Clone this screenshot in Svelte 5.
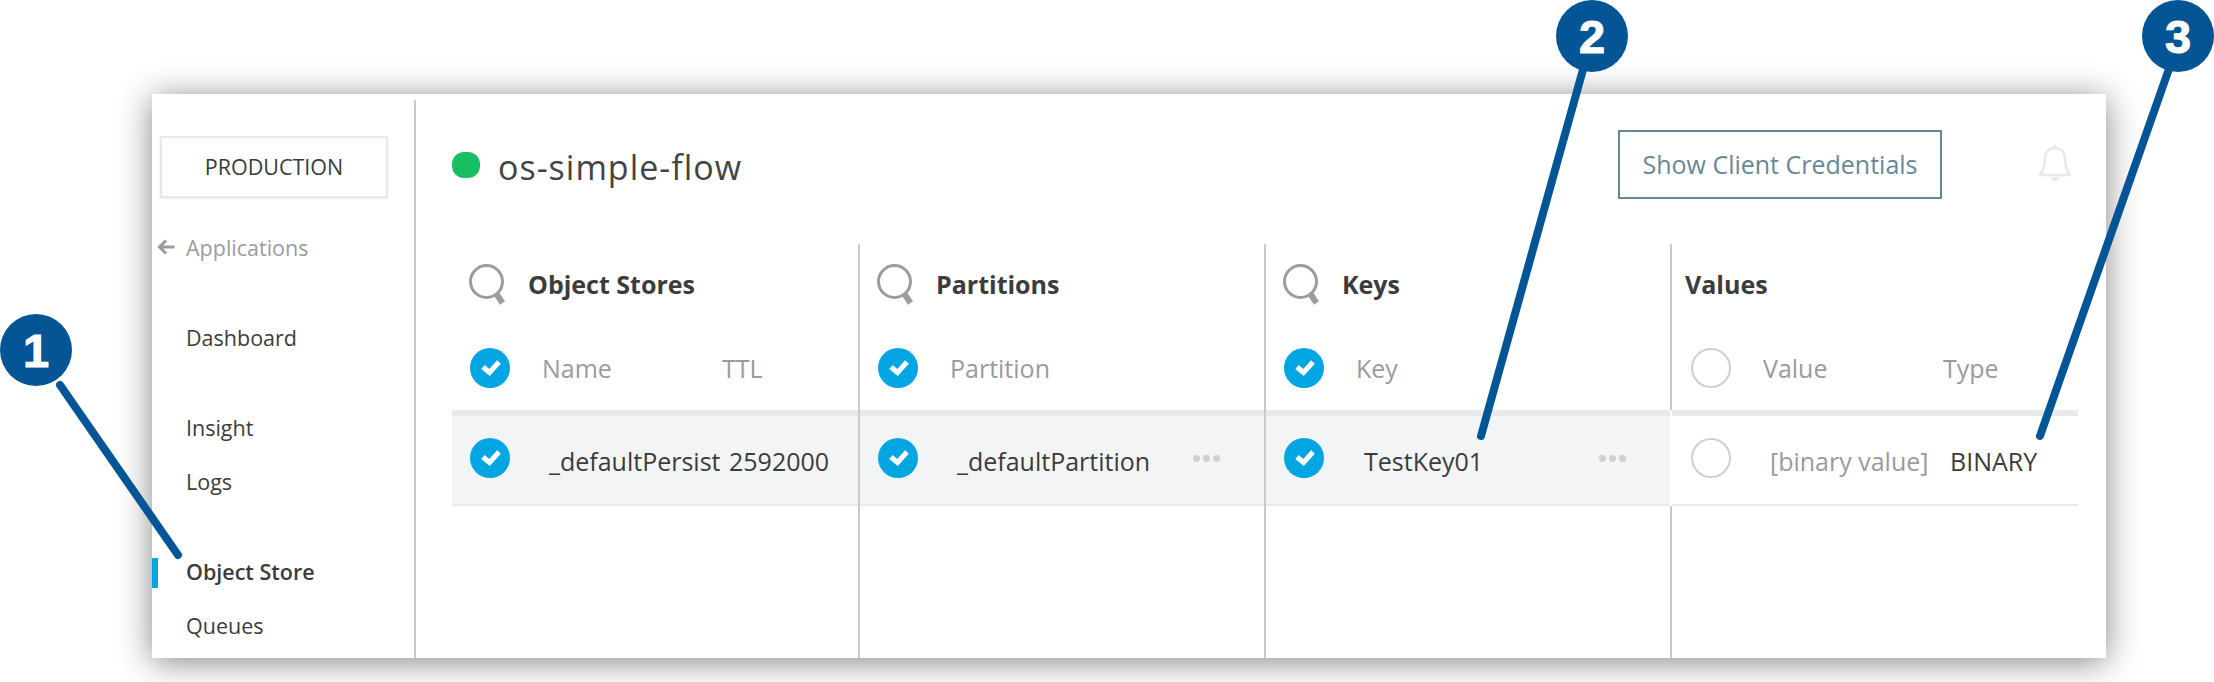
<script>
  const nav = [
    { label: 'Dashboard', group: true },
    { label: 'Insight', group: true },
    { label: 'Logs' },
    { label: 'Object Store', group: true, active: true },
    { label: 'Queues' }
  ];

  const columns = [
    {
      id: 'stores',
      title: 'Object Stores',
      search: true,
      checked: true,
      headers: ['Name', 'TTL'],
      cells: ['_defaultPersist', '2592000']
    },
    {
      id: 'partitions',
      title: 'Partitions',
      search: true,
      checked: true,
      headers: ['Partition'],
      cells: ['_defaultPartition'],
      more: true
    },
    {
      id: 'keys',
      title: 'Keys',
      search: true,
      checked: true,
      headers: ['Key'],
      cells: ['TestKey01'],
      more: true
    },
    {
      id: 'values',
      title: 'Values',
      checked: false,
      headers: ['Value', 'Type'],
      cells: ['[binary value]', 'BINARY']
    }
  ];

  const callouts = [
    { n: 1, cx: 36, cy: 350, x1: 60, y1: 385, x2: 178, y2: 555 },
    { n: 2, cx: 1592, cy: 36, x1: 1584, y1: 66, x2: 1481, y2: 436 },
    { n: 3, cx: 2178, cy: 36, x1: 2170, y1: 66, x2: 2040, y2: 436 }
  ];
</script>

{#snippet check(on)}
  <svg class="check" viewBox="0 0 40 40" width="40" height="40">
    {#if on}
      <circle cx="20" cy="20" r="20" fill="#00a5e1" />
      <path d="M13 19l6.5 5.5L29 14" fill="none" stroke="#fff" stroke-width="5" />
    {:else}
      <circle cx="20" cy="20" r="19" fill="#fff" stroke="#cfcfcf" stroke-width="2" />
    {/if}
  </svg>
{/snippet}

<div class="page">
  <div class="panel">
    <aside class="sidebar">
      <div class="env">PRODUCTION</div>
      <div class="back">
        <svg viewBox="0 0 18 16" width="18" height="16">
          <path d="M17.5 8H3M9 1.5L2.5 8 9 14.5" fill="none" stroke="#9b9b9b" stroke-width="3" />
        </svg>
        <span>Applications</span>
      </div>
      <nav>
        {#each nav as item}
          <div class="nav-item" class:group={item.group} class:active={item.active}>{item.label}</div>
        {/each}
      </nav>
    </aside>

    <main>
      <header>
        <span class="status"></span>
        <h1>os-simple-flow</h1>
        <button>Show Client Credentials</button>
        <svg class="bell" viewBox="0 0 34 40" width="34" height="40">
          <path d="M17 4c-7 0-10 5-10 11 0 7-2 12-5 16h30c-3-4-5-9-5-16 0-6-3-11-10-11zM17 1v3" fill="none" stroke="#e9e9e9" stroke-width="2.6" stroke-linejoin="round" />
          <path d="M13 33a4 4 0 0 0 8 0z" fill="#e9e9e9" />
        </svg>
      </header>

      <div class="columns">
        {#each columns as col}
          <section class={col.id}>
            <div class="title">
              {#if col.search}
                <svg class="search" viewBox="0 0 36 42" width="36" height="42">
                  <circle cx="17.5" cy="17.5" r="16" fill="none" stroke="#9c9c9c" stroke-width="3" />
                  <path d="M27.5 30l6 9" stroke="#9c9c9c" stroke-width="6" />
                </svg>
              {/if}
              <h2>{col.title}</h2>
            </div>
            <div class="line head">
              {@render check(col.checked)}
              {#each col.headers as label}
                <span class="cell">{label}</span>
              {/each}
            </div>
            <div class="line row">
              {@render check(col.checked)}
              {#each col.cells as value}
                <span class="cell">{value}</span>
              {/each}
              {#if col.more}
                <span class="more"><i></i><i></i><i></i></span>
              {/if}
            </div>
          </section>
        {/each}
      </div>
    </main>
  </div>

  <svg class="callouts" viewBox="0 0 2214 682" width="2214" height="682">
    {#each callouts as c}
      <line x1={c.x1} y1={c.y1} x2={c.x2} y2={c.y2} stroke="#035596" stroke-width="8" stroke-linecap="round" />
      <circle cx={c.cx} cy={c.cy} r="36" fill="#035596" />
      <text x={c.cx} y={c.cy + 17} text-anchor="middle">{c.n}</text>
    {/each}
  </svg>
</div>

<style>
  :global(body) {
    margin: 0;
    background: #fff;
  }

  .page {
    position: relative;
    box-sizing: border-box;
    width: 2214px;
    height: 682px;
    padding: 94px 108px 24px 152px;
    overflow: hidden;
    font-family: "Open Sans", "Liberation Sans", sans-serif;
    color: #3c3c3c;
  }

  .panel {
    display: flex;
    height: 564px;
    background: #fff;
    box-shadow: 0 4px 32px rgba(0, 0, 0, 0.48);
  }

  .sidebar {
    box-sizing: border-box;
    flex: none;
    width: 264px;
    margin-top: 6px;
    padding: 36px 0 0 8px;
    border-right: 2px solid #c9c9c9;
  }

  .env {
    box-sizing: border-box;
    width: 228px;
    height: 62px;
    line-height: 58px;
    border: 2px solid #e8e8e8;
    box-shadow: 0 1px 2px rgba(0, 0, 0, 0.08);
    text-align: center;
    font-size: 21.5px;
  }

  .back {
    display: flex;
    align-items: center;
    gap: 11px;
    margin: 34px 0 0 -3px;
    height: 30px;
    font-size: 21.5px;
    color: #9b9b9b;
  }

  nav {
    padding-top: 1px;
  }

  .nav-item {
    position: relative;
    height: 30px;
    line-height: 30px;
    margin: 24px 0 0 26px;
    font-size: 21.5px;
  }

  .nav-item.group {
    margin-top: 60px;
  }

  .nav-item.active {
    font-weight: 600;
  }

  .nav-item.active::before {
    content: "";
    position: absolute;
    left: -34px;
    top: 1px;
    width: 6px;
    height: 30px;
    background: #00a5e1;
  }

  main {
    flex: 1;
    min-width: 0;
    padding-left: 36px;
  }

  header {
    display: flex;
    align-items: center;
    box-sizing: border-box;
    height: 150px;
    padding-top: 36px;
    padding-bottom: 45px;
  }

  .status {
    width: 28px;
    height: 26px;
    border-radius: 12px;
    background: #1abc64;
  }

  h1 {
    margin: 5px 0 0 18px;
    font-size: 34px;
    font-weight: 400;
    letter-spacing: 1px;
    color: #444;
  }

  button {
    box-sizing: border-box;
    width: 324px;
    height: 69px;
    margin-left: auto;
    padding: 0 0 2px;
    border: 2px solid #688797;
    background: #fff;
    font: inherit;
    font-size: 25px;
    color: #688797;
  }

  .bell {
    margin: -2px 34px 0 96px;
  }

  .columns {
    display: grid;
    grid-template-columns: 408px 406px 406px 406px;
    height: 414px;
  }

  section {
    min-width: 0;
    border-right: 2px solid #c9c9c9;
  }

  section.values {
    border-right: 0;
  }

  .title {
    display: flex;
    align-items: center;
    gap: 23px;
    height: 81px;
    padding-left: 17px;
  }

  h2 {
    margin: 0 0 2px;
    font-size: 25px;
    font-weight: 700;
    color: #3c3c3c;
  }

  .values .title {
    padding-left: 13px;
  }

  .line {
    display: flex;
    align-items: center;
    gap: 32px;
    padding-left: 18px;
    font-size: 25px;
    white-space: nowrap;
  }

  .values .line {
    padding-left: 19px;
  }

  .check {
    flex: none;
  }

  .cell {
    flex: none;
    box-sizing: border-box;
    width: 180px;
    margin-right: -32px;
  }

  .head {
    height: 85px;
    color: #9b9b9b;
  }

  .row {
    position: relative;
    box-sizing: border-box;
    height: 96px;
    padding-bottom: 4px;
    border-top: 6px solid #e8e9eb;
    border-bottom: 2px solid #e9e9e9;
    background: #f3f4f6;
  }

  .row .cell {
    padding-left: 7px;
    margin-top: 5px;
  }

  .keys .row .cell {
    padding-left: 8px;
  }

  .keys .row {
    box-shadow: 2px 0 0 #fff;
  }

  .values .row {
    background: #fff;
  }

  .values .row .cell:first-of-type {
    color: #9b9b9b;
  }

  .more {
    display: flex;
    gap: 3px;
    margin-left: auto;
    margin-right: 44px;
  }

  .more i {
    width: 7px;
    height: 7px;
    border-radius: 50%;
    background: #cfd0d2;
  }

  .callouts {
    position: absolute;
    left: 0;
    top: 0;
    pointer-events: none;
  }

  .callouts text {
    font-family: "Liberation Sans", Arial, sans-serif;
    font-size: 47px;
    font-weight: 700;
    fill: #fff;
    stroke: #fff;
    stroke-width: 1px;
  }
</style>
